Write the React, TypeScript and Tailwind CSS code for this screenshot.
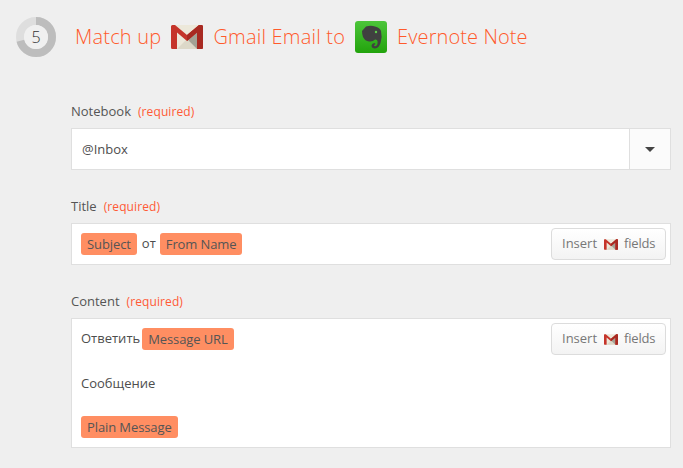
function GmailIcon({ className }: { className: string }) {
  return (
    <svg viewBox="0 0 32 24" className={className}>
      <rect x="0" y="0" width="32" height="24" rx="1.5" fill="#ece8da" />
      <path d="M6 24 L16 14 L26 24 Z" fill="#dcd8c8" />
      <path d="M26 5 L26 24 L16 14 Z" fill="#a3a295" />
      <path d="M0 1.5 Q0 0 1.5 0 L4 0 L16 10 L28 0 L30.5 0 Q32 0 32 1.5 L32 22.5 Q32 24 30.5 24 L26 24 L26 7.5 L16 16 L6 7.5 L6 24 L1.5 24 Q0 24 0 22.5 Z" fill="#c5342a" />
      <path d="M26 7.5 L26 24 L30.5 24 Q32 24 32 22.5 L32 1.5 Q32 0 30.5 0 L28 0 L16 10 L16 16 Z" fill="#a82a22" />
    </svg>
  );
}

function EvernoteIcon() {
  return (
    <svg viewBox="0 0 32 32" className="w-8 h-8 shrink-0">
      <defs>
        <linearGradient id="evergreen" x1="0" y1="0" x2="0" y2="1">
          <stop offset="0" stopColor="#4cc53a" />
          <stop offset="1" stopColor="#22a30c" />
        </linearGradient>
      </defs>
      <rect width="32" height="32" rx="3" fill="url(#evergreen)" />
      <path
        d="M7 10 L11 5.5 Q16 4 20 5.5 Q25 6.5 26 10 Q27.5 16 25.5 22 Q24 27 20 27.5 Q16.5 27.5 16.5 24.5 Q17 22 19.5 22 L20.5 23 Q19 23.5 19 24.5 Q19.5 25.5 21 25 Q23 24 22.5 20 Q22 18 20 18.5 Q18 21 14 20.5 Q10 20 8 16 Q7 13 7 10 Z"
        fill="#404040"
      />
      <circle cx="21" cy="11" r="1.2" fill="#5fd04c" />
    </svg>
  );
}

function Pill({ children }: { children: string }) {
  return (
    <span className="inline-block h-[22px] px-[6px] rounded-[3px] bg-[#ff8e62] text-[#555] leading-[22px] tracking-[-0.1px]">
      {children}
    </span>
  );
}

function FieldLabel({ children }: { children: string }) {
  return (
    <div className="flex items-baseline h-[18px] mb-[8px] text-[13px] leading-[18px] text-[#555]">
      <span>{children}</span>
      <span className="ml-[7px] text-[12px] tracking-[0.1px] text-[#ff5a36]">(required)</span>
    </div>
  );
}

function InsertButton() {
  return (
    <button className="absolute top-[4px] right-[4px] flex items-center h-[32px] w-[115px] pl-[10px] rounded-[4px] border border-[#dcdcdc] bg-gradient-to-b from-white to-[#f3f3f3] text-[13px] text-[#777]">
      Insert
      <GmailIcon className="w-[14px] h-[11px] ml-[7px] mr-[6px]" />
      <span className="tracking-[-0.2px]">fields</span>
    </button>
  );
}

export default function App() {
  return (
    <div className="w-[683px] h-[468px] overflow-hidden bg-[#efefef] font-['Open_Sans',sans-serif]">
      <div className="flex items-center h-[40px] mt-[17px] ml-[16px] absolute">
        <div className="relative w-10 h-10 mr-[19px] shrink-0">
          <svg viewBox="0 0 40 40" className="w-10 h-10">
            <circle cx="20" cy="20" r="16" fill="none" stroke="#dedede" strokeWidth="8" />
            <circle
              cx="20"
              cy="20"
              r="16"
              fill="none"
              stroke="#bdbdbd"
              strokeWidth="8"
              strokeDasharray="71 100.5"
              transform="rotate(-90 20 20)"
            />
            <circle cx="20" cy="20" r="12" fill="#f0f0f0" />
          </svg>
          <span className="absolute inset-0 flex items-center justify-center text-[16px] font-light text-[#333]">5</span>
        </div>
        <div className="flex items-center text-[20px] tracking-[0.2px] font-light text-[#ff5a2b] whitespace-nowrap">
          <span>Match up</span>
          <GmailIcon className="w-8 h-6 ml-[10px] mr-[10px] shrink-0" />
          <span className="mr-[10px]">Gmail Email to</span>
          <EvernoteIcon />
          <span className="ml-[10px] tracking-[0.1px]">Evernote Note</span>
        </div>
      </div>

      <div className="flex flex-col w-[600px] ml-[71px] pt-[102px]">
        <FieldLabel>Notebook</FieldLabel>
        <div className="flex h-[42px] mb-[27px] bg-white border border-[#dfdfdf] text-[13px] text-[#4d4d4d]">
          <div className="flex-1 flex items-center pl-[10px] pt-[1px]">@Inbox</div>
          <div className="flex items-center justify-center w-[41px] bg-[#fbfbfb] border-l border-[#dfdfdf]">
            <div className="w-0 h-0 border-x-[5px] border-x-transparent border-t-[5px] border-t-[#444]" />
          </div>
        </div>

        <FieldLabel>Title</FieldLabel>
        <div className="relative flex items-center h-[42px] mb-[27px] pl-[9px] bg-white border border-[#dfdfdf] text-[13px] text-[#4d4d4d]">
          <Pill>Subject</Pill>
          <span className="ml-[5px] mr-[4px]">от</span>
          <Pill>From Name</Pill>
          <InsertButton />
        </div>

        <FieldLabel>Content</FieldLabel>
        <div className="relative h-[130px] pl-[9px] pt-[9px] bg-white border border-[#dfdfdf] text-[13px] text-[#4d4d4d]">
          <div className="flex items-center h-[22px]">
            <span className="mr-[2px]">Ответить</span>
            <Pill>Message URL</Pill>
          </div>
          <div className="flex items-center h-[22px] mt-[22px] pt-[1px]">Сообщение</div>
          <div className="flex items-center h-[22px] mt-[22px]">
            <Pill>Plain Message</Pill>
          </div>
          <InsertButton />
        </div>
      </div>
    </div>
  );
}
